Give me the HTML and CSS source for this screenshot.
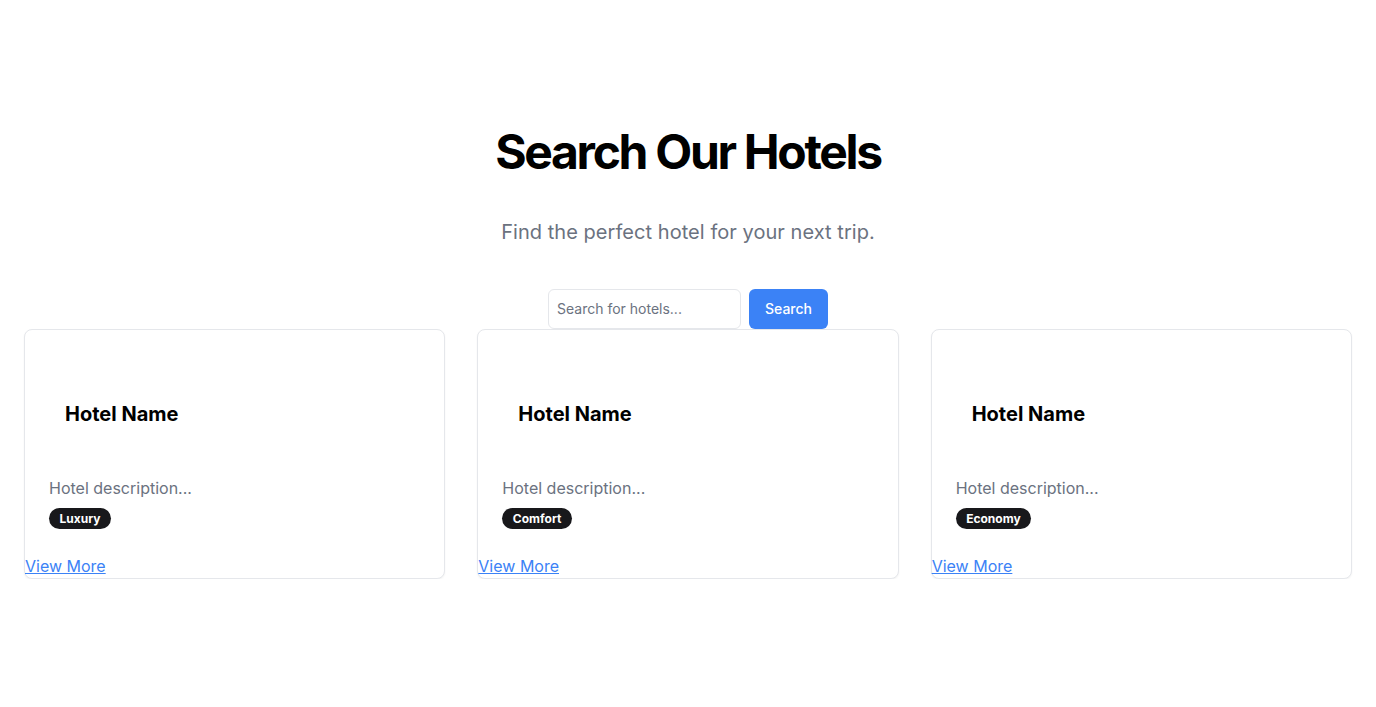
FILE: index.html
```html
<!DOCTYPE html>
<html lang="en">
<head>
<meta charset="utf-8">
<title>Search Our Hotels</title>
<link rel="stylesheet" href="styles.css">
</head>
<body>
<main class="page">
  <section class="hero">
    <h1 class="hero-title">Search Our Hotels</h1>
    <p class="hero-subtitle">Find the perfect hotel for your next trip.</p>
    <form class="search-form">
      <input class="search-input" type="text" placeholder="Search for hotels...">
      <button class="search-button" type="button">Search</button>
    </form>
  </section>
  <section class="cards">
    <article class="card">
      <div class="card-header"><h3 class="card-title">Hotel Name</h3></div>
      <div class="card-content">
        <p class="card-desc">Hotel description...</p>
        <span class="badge">Luxury</span>
      </div>
      <a class="card-link" href="#">View More</a>
    </article>
    <article class="card">
      <div class="card-header"><h3 class="card-title">Hotel Name</h3></div>
      <div class="card-content">
        <p class="card-desc">Hotel description...</p>
        <span class="badge">Comfort</span>
      </div>
      <a class="card-link" href="#">View More</a>
    </article>
    <article class="card">
      <div class="card-header"><h3 class="card-title">Hotel Name</h3></div>
      <div class="card-content">
        <p class="card-desc">Hotel description...</p>
        <span class="badge">Economy</span>
      </div>
      <a class="card-link" href="#">View More</a>
    </article>
  </section>
</main>
</body>
</html>
```
FILE: styles.css
```css
* { box-sizing: border-box; }
html, body { margin: 0; padding: 0; background: #ffffff; }
body { font-family: Inter, "Noto Sans", sans-serif; color: #0a0a0a; }

.page { padding: 0 24px; }

.hero {
  display: flex;
  flex-direction: column;
  align-items: center;
  padding-top: 128px;
}
.hero-title {
  margin: 0;
  font-size: 48px;
  line-height: 48px;
  font-weight: 700;
  letter-spacing: -0.048em;
  color: #000;
}
.hero-subtitle {
  margin: 42px 0 0;
  font-size: 20px;
  line-height: 28px;
  letter-spacing: 0.05px;
  color: #6b7280;
}
.search-form {
  margin-top: 43px;
  display: flex;
  gap: 8px;
}
.search-input {
  width: 193px;
  height: 40px;
  border: 1px solid #e5e7eb;
  border-radius: 6px;
  padding: 0 8px 1px;
  font-family: inherit;
  font-size: 14px;
  color: #111827;
  background: #fff;
}
.search-input::placeholder { color: #6b7280; }
.search-button {
  width: 79px;
  height: 40px;
  border: none;
  border-radius: 6px;
  background: #3b82f6;
  color: #fff;
  font-family: inherit;
  font-size: 14px;
  font-weight: 500;
  padding: 0 16px 1px;
}

.cards {
  display: grid;
  grid-template-columns: repeat(3, 1fr);
  gap: 32px;
}
.card {
  border: 1px solid #e5e7eb;
  border-radius: 8px;
  box-shadow: 0 1px 2px rgba(0, 0, 0, 0.05);
  background: #fff;
  display: flex;
  flex-direction: column;
}
.card-header { padding: 24px; }
.card-title {
  margin: 0;
  padding: 46px 16px 0;
  font-size: 20px;
  line-height: 28px;
  font-weight: 700;
  color: #000;
}
.card-content { padding: 24px 24px 25px; display: flex; flex-direction: column; align-items: flex-start; }
.card-desc {
  margin: 0;
  font-size: 16px;
  line-height: 24px;
  color: #6b7280;
}
.badge {
  margin-top: 8px;
  display: inline-block;
  padding: 2px 10.5px;
  line-height: 17px;
  font-size: 12px;
  font-weight: 700;
  color: #fff;
  background: #18181b;
  border-radius: 9999px;
}
.card-link {
  align-self: flex-start;
  font-size: 16px;
  line-height: 24px;
  color: #3b82f6;
  text-decoration: underline;
}
```
